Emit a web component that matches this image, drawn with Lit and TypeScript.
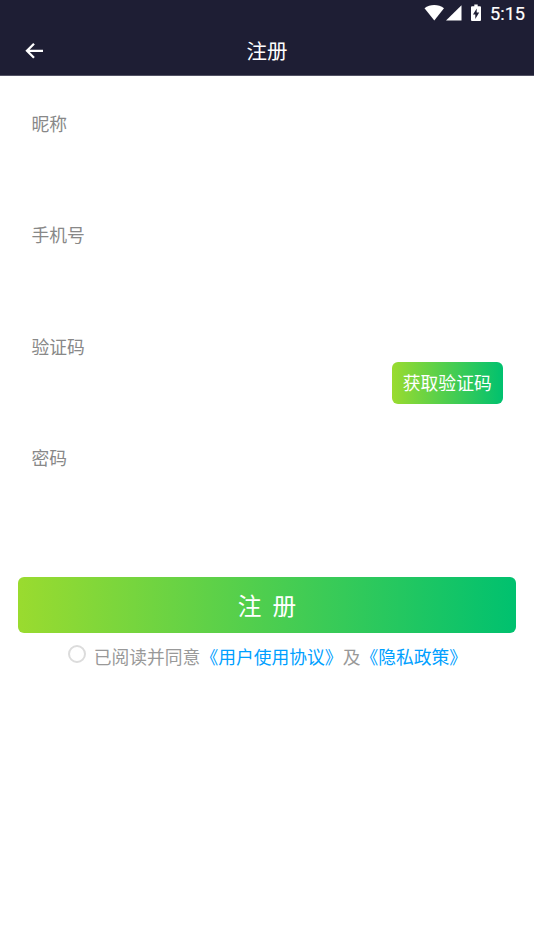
import { LitElement, html, css } from "lit";
import { customElement } from "lit/decorators.js";

@customElement("app-root")
class AppRoot extends LitElement {
  static styles = css`
    :host {
      display: flex;
      flex-direction: column;
      height: 950px;
      overflow: hidden;
      background: #fff;
      font-family: Roboto, "Noto Sans CJK SC", sans-serif;
    }
    .top {
      box-sizing: border-box;
      background: #1e1e34;
      height: 76px;
      border-bottom: 1px solid #525264;
      flex: none;
    }
    .status {
      height: 26px;
      display: flex;
      justify-content: flex-end;
      padding-right: 8px;
      color: #fff;
    }
    .status svg { flex: none; }
    .clock { font-size: 18.2px; font-weight: 400; -webkit-text-stroke: 0.2px #fff; line-height: 28px; width: 36px; white-space: nowrap; }
    .bar {
      height: 49px;
      display: grid;
      grid-template-columns: 69px 1fr 69px;
      align-items: center;
      color: #fff;
    }
    .back { display: block; margin-left: 24px; }
    .title { text-align: center; font-size: 20.5px; line-height: 30px; padding-top: 3px; }
    .field {
      height: 111.3px;
      box-sizing: border-box;
      padding: 35px 31px 0 31.4px;
      display: flex;
      justify-content: space-between;
      font-size: 17.8px;
      line-height: 28px;
      color: #888;
    }
    .fields { flex: none; }
    .code {
      box-sizing: border-box;
      margin-top: 28px;
      padding-top: 2px;
      width: 111.5px;
      height: 42.3px;
      border-radius: 6px;
      display: flex;
      align-items: center;
      justify-content: center;
      color: #fff;
      background: linear-gradient(to right, #9adb2f, #00c16f);
    }
    .submit {
      flex: none;
      box-sizing: border-box;
      margin: 55.6px 18px 0;
      padding-top: 5px;
      height: 56px;
      border-radius: 6px;
      display: flex;
      align-items: center;
      justify-content: center;
      gap: 11px;
      font-size: 23.7px;
      line-height: 36px;
      color: #fff;
      background: linear-gradient(to right, #9adb2f, #00c16f);
    }
    .agree {
      display: flex;
      margin: 11.2px 0 0 68.4px;
      font-size: 17.8px;
      line-height: 28px;
      color: #999;
      white-space: nowrap;
    }
    .radio {
      box-sizing: border-box;
      width: 18px;
      height: 18px;
      border: 2px solid #dcdcdc;
      border-radius: 50%;
      margin: 1px 7.3px 0 0;
    }
    .link { color: #00a0ff; }
  `;

  render() {
    return html`
      <header class="top">
        <div class="status">
          <svg width="66" height="26" viewBox="0 0 66 26" fill="#fff">
            <path d="M10.300 20.500L.5 8.300C6 4 14.500 4 20 8.300Z" />
            <path d="M37.500 5.300V20.500H22Z" />
            <path fill-rule="evenodd" d="M50.300 4.500h3.400v1.800h2.300q1 0 1 1v12.700q0 1-1 1h-8q-1 0-1-1V7.300q0-1 1-1h2.300ZM52.700 8.500l-3.700 6h2.300v4.500l3.900-6.500h-2.500Z" />
          </svg>
          <span class="clock">5:15</span>
        </div>
        <div class="bar">
          <svg class="back" width="22" height="20" viewBox="0 0 22 20" fill="none" stroke="#fff" stroke-width="2.300">
            <path d="M19 9.800H3.500M10 2.800L3 9.800L10 16.800" />
          </svg>
          <div class="title">注册</div>
        </div>
      </header>
      <div class="fields">
        <div class="field">昵称</div>
        <div class="field">手机号</div>
        <div class="field"><span>验证码</span><span class="code">获取验证码</span></div>
        <div class="field">密码</div>
      </div>
      <div class="submit"><span>注</span><span>册</span></div>
      <div class="agree">
        <span class="radio"></span>
        <span>已阅读并同意</span><span class="link">《用户使用协议》</span><span>及</span><span class="link">《隐私政策》</span>
      </div>
    `;
  }
}
